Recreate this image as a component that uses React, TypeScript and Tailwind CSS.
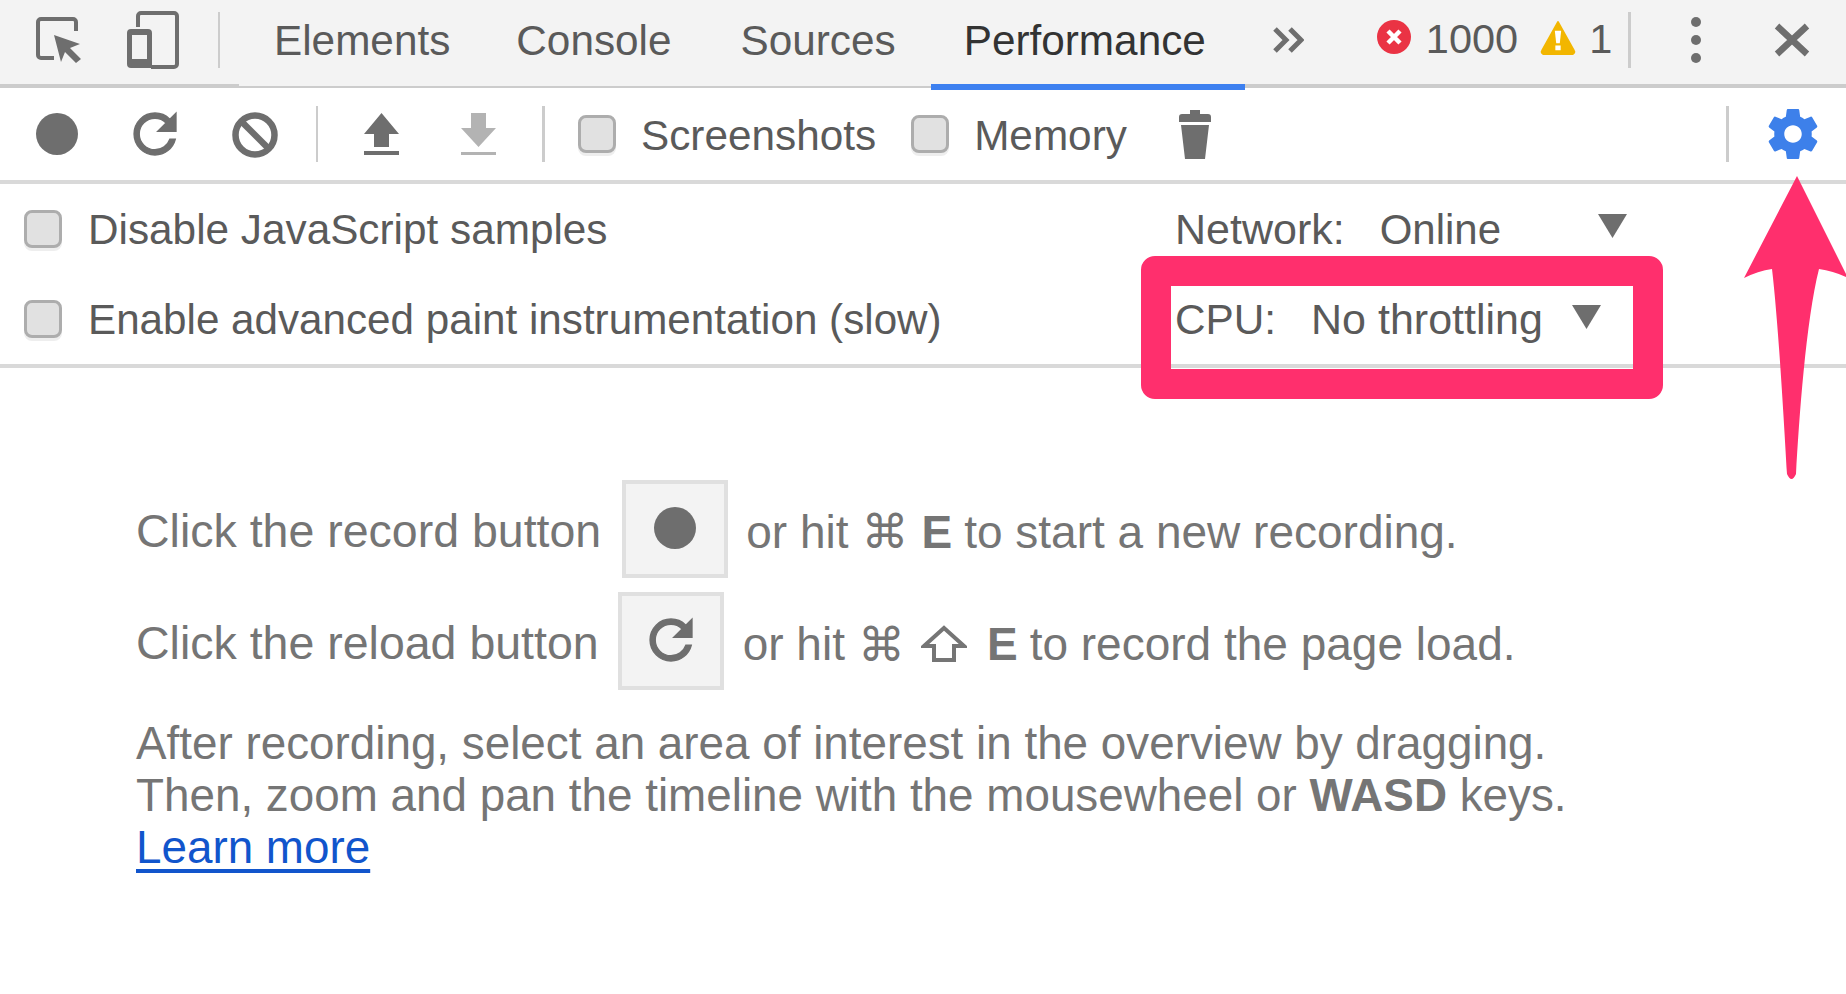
const Checkbox = ({ className = "" }: { className?: string }) => (
  <div className={`w-[38px] h-[38px] shrink-0 rounded-[8px] border-[3px] border-[#adadad] bg-[#e1e1e1] shadow-[0_3px_0_#eeeeee] ${className}`} />
);

const Sep = ({ className = "" }: { className?: string }) => <div className={`h-[56px] shrink-0 bg-[#cccccc] ${className}`} />;

const Reload = ({ className = "" }: { className?: string }) => (
  <svg viewBox="4 4 16 16" className={`w-[42px] h-[42px] shrink-0 overflow-visible ${className}`} fill="#6e6e6e" stroke="#6e6e6e" strokeWidth="0.5">
    <path d="M17.65 6.35A7.95 7.95 0 0 0 12 4c-4.42 0-7.99 3.58-7.99 8s3.57 8 7.99 8c3.73 0 6.84-2.55 7.73-6h-2.08A5.99 5.99 0 0 1 12 18c-3.31 0-6-2.69-6-6s2.69-6 6-6c1.66 0 3.14.69 4.22 1.78L13 11h7V4l-2.35 2.35z" />
  </svg>
);

const Dot = ({ className = "" }: { className?: string }) => <div className={`w-[42px] h-[42px] shrink-0 rounded-full bg-[#6e6e6e] ${className}`} />;

const Triangle = ({ className = "" }: { className?: string }) => (
  <svg viewBox="0 0 29 24" className={`w-[29px] h-[24px] shrink-0 ${className}`} fill="#6e6e6e"><path d="M0 0H29L14.5 24z" /></svg>
);

const Tab = ({ children, className = "" }: { children: string; className?: string }) => (
  <div className={`h-[84px] flex items-center pb-[2px] text-[42.3px] text-[#5a5a5a] ${className}`}>{children}</div>
);

const ToolText = ({ children, className = "" }: { children: string; className?: string }) => (
  <span className={`text-[42.3px] text-[#5a5a5a] whitespace-nowrap ${className}`}>{children}</span>
);

const Cmd = ({ className = "" }: { className?: string }) => (
  <span className={`text-[47px] leading-none ${className}`} style={{ fontFamily: '"DejaVu Sans", sans-serif' }}>⌘</span>
);

export default function App() {
  return (
    <div className="w-[1846px] h-[994px] relative overflow-hidden bg-white font-['Liberation_Sans',Arial,sans-serif]">
      {/* Tab strip */}
      <div className="flex h-[88px] bg-[#f3f3f3]">
        <div className="w-[239px] h-[88px] shrink-0 border-b-4 border-[#cccccc] flex items-center pb-[4px]">
          <svg viewBox="0 0 48 46" className="ml-[35px] w-[48px] h-[46px] shrink-0">
            <path d="M19 41H6a3 3 0 0 1-3-3V5a3 3 0 0 1 3-3h32a3 3 0 0 1 3 3v9" fill="none" stroke="#6e6e6e" strokeWidth="4" />
            <path d="M19 18l26 9-10 4 11 11-5 4-11-11-4 10z" fill="#6e6e6e" />
          </svg>
          <svg viewBox="0 0 54 58" className="ml-[43px] w-[54px] h-[58px] shrink-0">
            <path d="M12 16V5a3 3 0 0 1 3-3h33a3 3 0 0 1 3 3v48a3 3 0 0 1-3 3H25" fill="none" stroke="#6e6e6e" strokeWidth="4" />
            <path fillRule="evenodd" d="M5 18h17a4 4 0 0 1 4 4v35H5a4 4 0 0 1-4-4V22a4 4 0 0 1 4-4zM6 24v24h15V24z" fill="#6e6e6e" />
          </svg>
          <Sep className="w-[2px] ml-[38px]" />
        </div>
        <div className="h-[88px] shrink-0 flex items-start border-b-2 border-[#cccccc]">
          <Tab className="pl-[35px] pr-[31px]">Elements</Tab>
          <Tab className="pl-[35px] pr-[34px]">Console</Tab>
          <Tab className="pl-[35px] pr-[35px]">Sources</Tab>
          <div className="relative z-10 h-[90px] border-b-[6px] border-[#3d80f0] flex items-center pb-[2px] pl-[33px] pr-[39px] text-[42.3px] text-[#333333]">Performance</div>
        </div>
        <div className="flex-1 h-[88px] border-b-4 border-[#cccccc] flex items-center pb-[4px]">
          <svg viewBox="0 0 31 26" className="ml-[28px] w-[31px] h-[26px] shrink-0" fill="none" stroke="#6e6e6e" strokeWidth="5">
            <path d="M2 2l11 11L2 24M17 2l11 11-11 11" />
          </svg>
          <svg viewBox="0 0 34 34" className="ml-[73px] mb-[7px] w-[34px] h-[34px] shrink-0">
            <circle cx="17" cy="17" r="17" fill="#ea3344" />
            <path d="M11 11l12 12M23 11L11 23" stroke="#fff" strokeWidth="4.5" />
          </svg>
          <span className="ml-[15px] mb-[2px] text-[41.5px] text-[#5a5a5a]">1000</span>
          <svg viewBox="0 0 34 34" className="ml-[22px] mb-[7px] w-[36px] h-[36px] shrink-0">
            <path d="M17 3L32 30a2 2 0 0 1-2 3H4a2 2 0 0 1-2-3z" fill="#f2b600" stroke="#f2b600" strokeWidth="2" strokeLinejoin="round" />
            <path d="M14 11h6l-1.3 12h-3.4z" fill="#fff" />
            <rect x="14.5" y="25" width="5" height="4.5" fill="#fff" />
          </svg>
          <span className="ml-[13px] mb-[2px] text-[41.5px] text-[#5a5a5a]">1</span>
          <Sep className="w-[3px] ml-[16px]" />
          <div className="ml-[60px] flex flex-col gap-[8px] shrink-0">
            <div className="w-[10px] h-[10px] rounded-full bg-[#6e6e6e]" />
            <div className="w-[10px] h-[10px] rounded-full bg-[#6e6e6e]" />
            <div className="w-[10px] h-[10px] rounded-full bg-[#6e6e6e]" />
          </div>
          <svg viewBox="0 0 36 34" className="ml-[73px] w-[36px] h-[34px] shrink-0" fill="none" stroke="#6e6e6e" strokeWidth="6.5">
            <path d="M3 3l30 28M33 3L3 31" />
          </svg>
        </div>
      </div>

      {/* Record toolbar */}
      <div className="h-[96px] border-b-4 border-[#d9d9d9] flex items-center">
        <Dot className="ml-[36px]" />
        <Reload className="ml-[56px]" />
        <svg viewBox="0 0 46 46" className="ml-[56px] mt-[2px] w-[46px] h-[46px] shrink-0" fill="none" stroke="#6e6e6e" strokeWidth="6.5">
          <circle cx="23" cy="23" r="19.5" />
          <path d="M9 9l28 28" />
        </svg>
        <Sep className="w-[2px] ml-[38px]" />
        <svg viewBox="0 0 35 42" className="ml-[46px] w-[35px] h-[42px] shrink-0" fill="#6e6e6e">
          <path d="M17.5 0L35 21H25V34H10V21H0zM0 38H35V42H0z" />
        </svg>
        <svg viewBox="0 0 35 42" className="ml-[62px] w-[35px] h-[42px] shrink-0" fill="#b3b3b3">
          <path d="M10 0H25V15H35L17.5 34 0 15H10zM0 39H35V42H0z" />
        </svg>
        <Sep className="w-[3px] ml-[46px]" />
        <Checkbox className="ml-[33px]" />
        <ToolText className="ml-[25px] pt-[3px]">Screenshots</ToolText>
        <Checkbox className="ml-[35px]" />
        <ToolText className="ml-[25px] pt-[3px]">Memory</ToolText>
        <svg viewBox="0 0 32 49" className="ml-[52px] w-[32px] h-[49px] shrink-0" fill="#6e6e6e">
          <path d="M11 0H21V4H29a3 3 0 0 1 3 3V12H0V7a3 3 0 0 1 3-3H11zM2 15H30L26 49H6z" />
        </svg>
        <div className="flex-1" />
        <Sep className="w-[3px]" />
        <svg viewBox="2 2 20 20" className="ml-[39px] mr-[28px] w-[50px] h-[50px] shrink-0" fill="#3d80ea">
          <path d="M19.43 12.98c.04-.32.07-.64.07-.98s-.03-.66-.07-.98l2.11-1.65c.19-.15.24-.42.12-.64l-2-3.46c-.12-.22-.39-.3-.61-.22l-2.49 1c-.52-.4-1.08-.73-1.69-.98l-.38-2.65C14.46 2.18 14.25 2 14 2h-4c-.25 0-.46.18-.49.42l-.38 2.65c-.61.25-1.17.59-1.69.98l-2.49-1c-.23-.09-.49 0-.61.22l-2 3.46c-.13.22-.07.49.12.64l2.11 1.65c-.04.32-.07.65-.07.98s.03.66.07.98l-2.11 1.65c-.19.15-.24.42-.12.64l2 3.46c.12.22.39.3.61.22l2.49-1c.52.4 1.08.73 1.69.98l.38 2.65c.03.24.24.42.49.42h4c.25 0 .46-.18.49-.42l.38-2.65c.61-.25 1.17-.59 1.69-.98l2.49 1c.23.09.49 0 .61-.22l2-3.46c.12-.22.07-.49-.12-.64l-2.11-1.65zM12 15.5c-1.93 0-3.5-1.57-3.5-3.5s1.57-3.5 3.5-3.5 3.5 1.57 3.5 3.5-1.57 3.5-3.5 3.5z" />
        </svg>
      </div>

      {/* Settings */}
      <div className="border-b-4 border-[#d9d9d9]">
        <div className="h-[90px] flex items-center">
          <div className="w-[1175px] shrink-0 pl-[24px] flex items-center">
            <Checkbox />
            <ToolText className="ml-[26px] pt-[1px]">Disable JavaScript samples</ToolText>
          </div>
          <span className="pt-[1px] text-[43px] text-[#5a5a5a] whitespace-nowrap">Network:</span>
          <span className="ml-[35px] pt-[1px] text-[42px] text-[#5a5a5a] whitespace-nowrap">Online</span>
          <Triangle className="ml-[97px] mb-[6px]" />
        </div>
        <div className="h-[90px] flex items-center">
          <div className="w-[1175px] shrink-0 pl-[24px] flex items-center">
            <Checkbox />
            <span className="ml-[26px] pt-[1px] text-[42.2px] text-[#5a5a5a] whitespace-nowrap">Enable advanced paint instrumentation (slow)</span>
          </div>
          <ToolText className="pt-[1px]">CPU:</ToolText>
          <span className="ml-[35px] pt-[1px] text-[43px] text-[#5a5a5a] whitespace-nowrap">No throttling</span>
          <Triangle className="ml-[29px] mb-[5px]" />
        </div>
      </div>

      {/* Instructions */}
      <div className="mt-[112px] pl-[136px] text-[46.5px] text-[#757575]">
        <div className="flex items-center">
          <div className="mt-[6px] whitespace-nowrap">Click the record button</div>
          <div className="ml-[21px] w-[106px] h-[98px] border-[4px] border-[#e0e0e0] bg-[#f3f3f3] flex items-center justify-center shrink-0">
            <Dot className="mb-[2px]" />
          </div>
          <div className="ml-[18px] mt-[6px] flex items-baseline whitespace-nowrap text-[46px]">
            <span>or hit</span>
            <Cmd className="ml-[13px]" />
            <b className="ml-[13px]">E</b>
            <span className="ml-[12px]">to start a new recording.</span>
          </div>
        </div>
        <div className="flex items-center mt-[14px]">
          <div className="mt-[6px] whitespace-nowrap">Click the reload button</div>
          <div className="ml-[19px] w-[106px] h-[98px] border-[4px] border-[#e0e0e0] bg-[#f3f3f3] flex items-center justify-center shrink-0">
            <Reload className="mb-[2px]" />
          </div>
          <div className="ml-[19px] mt-[6px] flex items-center whitespace-nowrap text-[46px]">
            <span>or hit</span>
            <Cmd className="ml-[13px]" />
            <svg viewBox="0 0 46 38" className="ml-[16px] w-[46px] h-[38px] shrink-0" fill="none" stroke="#757575" strokeWidth="4">
              <path d="M23 3L43 21H33V35H13V21H3z" />
            </svg>
            <b className="ml-[20px]">E</b>
            <span className="ml-[12px]">to record the page load.</span>
          </div>
        </div>
        <div className="mt-[28px] leading-[52px] whitespace-nowrap text-[45.8px]">
          <div>After recording, select an area of interest in the overview by dragging.</div>
          <div>Then, zoom and pan the timeline with the mousewheel or <b>WASD</b> keys.</div>
          <a className="text-[#1155cc] underline decoration-[4px] underline-offset-[6px]">Learn more</a>
        </div>
      </div>

      {/* Annotations */}
      <div className="absolute left-[1141px] top-[256px] w-[522px] h-[143px] border-[30px] border-[#ff2f6d] rounded-[14px]" />
      <svg viewBox="0 0 106 315" className="absolute left-[1740px] top-[170px] w-[106px] h-[315px]" fill="#ff2f6d">
        <path d="M57 6L4 108Q18 101 32 99C38 150 44 250 47 304Q51.5 314 56 304C59 250 66 150 79 99Q94 101 108 108z" />
      </svg>
    </div>
  );
}
